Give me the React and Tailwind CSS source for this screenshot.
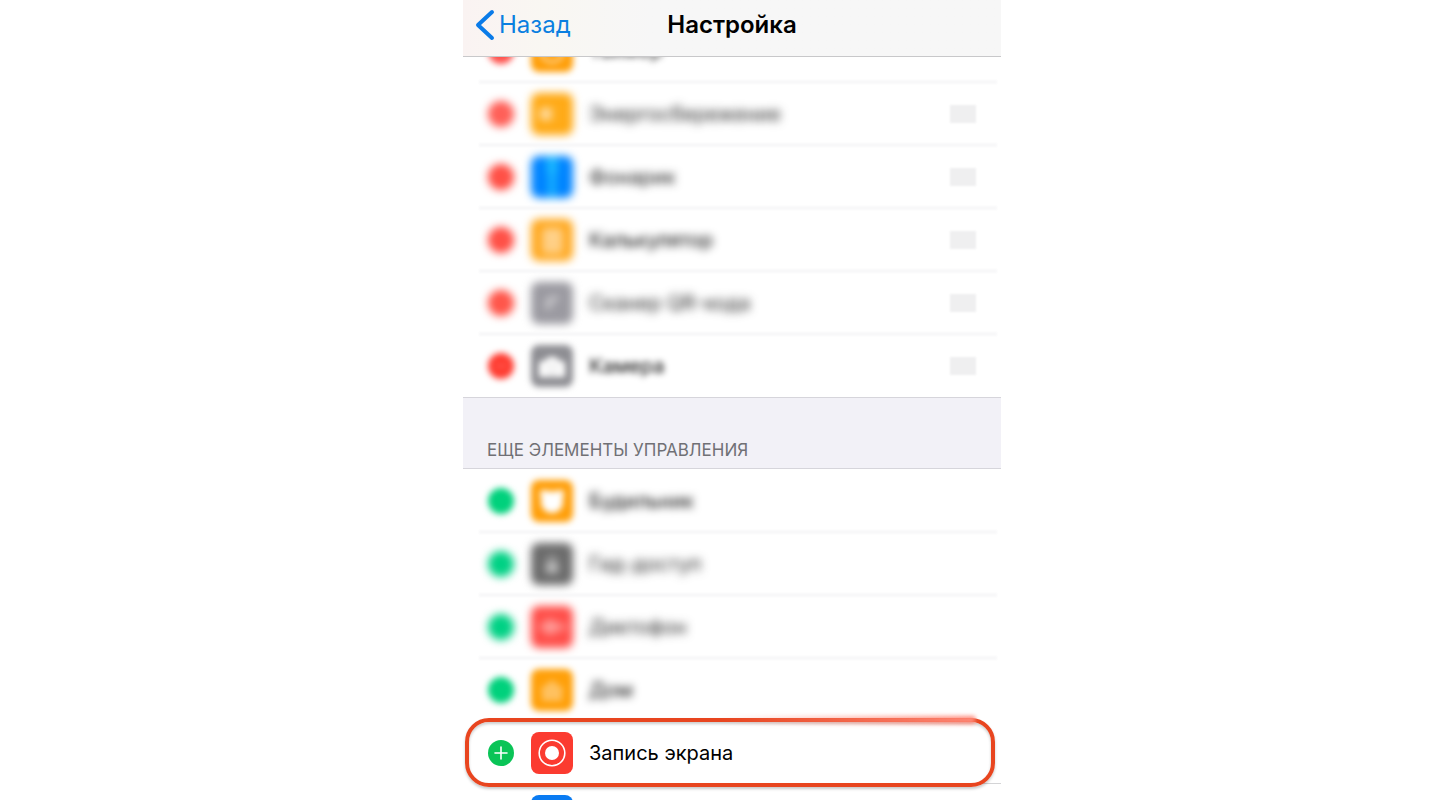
import clsx from 'clsx'

// ---------------------------------------------------------------------------
// Data
// ---------------------------------------------------------------------------
const INCLUDED = [
  { id: 'timer', label: 'Таймер', tile: 'bg-[#ff9f0a]', badge: 'bg-[#ff4f4a]', blur: 'blur-[3px]', textBlur: 'blur-[3px]', ink: 'text-neutral-800' },
  { id: 'battery', label: 'Энергосбережение', tile: 'bg-[#ffa914]', badge: 'bg-[#ff5a52]', blur: 'blur-[4px]', textBlur: 'blur-[5px]', ink: 'text-neutral-800', handle: true },
  { id: 'torch', label: 'Фонарик', tile: 'bg-[#0084ff]', badge: 'bg-[#ff4a40]', blur: 'blur-[4px]', textBlur: 'blur-[4px]', ink: 'text-neutral-900', handle: true },
  { id: 'calculator', label: 'Калькулятор', tile: 'bg-[#ffa71c]', badge: 'bg-[#ff4a40]', blur: 'blur-[4px]', textBlur: 'blur-[4px]', ink: 'text-black', handle: true },
  { id: 'qr', label: 'Сканер QR-кода', tile: 'bg-[#9b9aa1]', badge: 'bg-[#ff5044]', blur: 'blur-[4px]', textBlur: 'blur-[5px]', ink: 'text-neutral-800', handle: true },
  { id: 'camera', label: 'Камера', tile: 'bg-[#8e8e93]', badge: 'bg-[#ff3b30]', blur: 'blur-[3px]', textBlur: 'blur-[3px]', ink: 'text-black', handle: true },
]

const MORE = [
  { id: 'alarm', label: 'Будильник', tile: 'bg-[#ff9f0a]', badge: 'bg-[#00d17c]', blur: 'blur-[3px]', textBlur: 'blur-[4px]', ink: 'text-black' },
  { id: 'lock', label: 'Гид-доступ', tile: 'bg-[#6c6c6c]', badge: 'bg-[#00d184]', blur: 'blur-[4px]', textBlur: 'blur-[5px]', ink: 'text-neutral-800' },
  { id: 'voice', label: 'Диктофон', tile: 'bg-[#ff4f4a]', badge: 'bg-[#00d184]', blur: 'blur-[4px]', textBlur: 'blur-[5px]', ink: 'text-neutral-800' },
  { id: 'home', label: 'Дом', tile: 'bg-[#ffa00a]', badge: 'bg-[#00d17c]', blur: 'blur-[3px]', textBlur: 'blur-[4px]', ink: 'text-black' },
  { id: 'record', label: 'Запись экрана', tile: 'bg-[#fb3b30]', badge: 'bg-[#0ac457]', ink: 'text-black', highlighted: true },
  { id: 'hearing', tile: 'bg-[#0a7bf2]', badge: 'bg-[#0ac457]', ink: 'text-black' },
]

// ---------------------------------------------------------------------------
// Glyphs, all on a 42px tile
// ---------------------------------------------------------------------------
const GLYPHS = {
  timer: (
    <g fill="none" stroke="#fff" strokeWidth="3" opacity="0.6">
      <circle cx="21" cy="21" r="11" />
      <path d="M21 21l-5-6" />
    </g>
  ),
  battery: (
    <g opacity="0.6">
      <rect x="9" y="15" width="12" height="12" rx="2" fill="#fff" />
      <rect x="8" y="13" width="24" height="16" rx="3" fill="none" stroke="#fff" opacity="0.3" />
    </g>
  ),
  torch: <path d="M16 1h10v14l-2 4v22h-6V19l-2-4z" fill="#1cbcff" />,
  calculator: (
    <g fill="#fff">
      <rect x="11" y="9" width="21" height="26" rx="3" opacity="0.45" />
      <path d="M14 11h15v5H14zM14 20h3v3h-3zM20 20h3v3h-3zM26 20h3v3h-3zM14 27h3v3h-3zM20 27h3v3h-3zM26 27h3v3h-3z" opacity="0.15" />
    </g>
  ),
  qr: <path d="M15 27v-7q1-5 10-6l3 1-3 4h-4l-2 8z" fill="#fff" opacity="0.55" />,
  camera: (
    <g>
      <path d="M8 19q0-3 3-3h3l3-4h8l3 4h3q3 0 3 3v13H8z" fill="#fff" />
      <circle cx="21" cy="24" r="5" fill="none" stroke="#b5b5b8" strokeWidth="1" />
    </g>
  ),
  alarm: (
    <g fill="#fff">
      <circle cx="21" cy="22" r="11" />
      <circle cx="13" cy="14" r="4" />
      <circle cx="29" cy="14" r="4" />
    </g>
  ),
  lock: (
    <g opacity="0.6">
      <rect x="15" y="20" width="12" height="10" rx="2" fill="#fff" />
      <path d="M18 20v-3a3 3 0 0 1 6 0v3" fill="none" stroke="#fff" strokeWidth="2" />
    </g>
  ),
  voice: (
    <path d="M8 21h4M14 17v8M18 13v16M22 15v12M26 17v8M30 19v4M32 21h4" stroke="#fff" strokeWidth="3" opacity="0.6" />
  ),
  home: <path d="M21 11L8 21h3v11h20V21h3z" fill="#fff" opacity="0.35" />,
  record: (
    <g>
      <circle cx="21" cy="21" r="12.8" fill="none" stroke="#fff" strokeWidth="1.6" />
      <circle cx="21" cy="21" r="7" fill="#fff" />
    </g>
  ),
  hearing: <circle cx="21" cy="18" r="12" fill="none" stroke="#fff" strokeWidth="2" />,
}

function Tile({ item }) {
  return (
    <svg
      viewBox="0 0 42 42"
      className={clsx('size-[42px] shrink-0 rounded-lg', item.tile, item.blur)}
      aria-hidden="true"
    >
      {GLYPHS[item.id]}
    </svg>
  )
}

function BadgeButton({ item, removable }) {
  return (
    <button
      type="button"
      className={clsx('size-[26px] shrink-0 rounded-full', item.badge, item.blur)}
      aria-label={removable ? 'Удалить' : 'Добавить'}
    >
      <svg viewBox="0 0 26 26" className="size-full" fill="none" stroke="#fff" strokeWidth="1.6">
        {removable && <path d="M7 13h12" opacity="0.3" />}
        {item.highlighted && <path d="M7 13h12M13 7v12" strokeLinecap="round" />}
      </svg>
    </button>
  )
}

// Orange outline round a row; its top edge fades out towards the right
function Highlight() {
  return (
    <div className="pointer-events-none absolute -inset-y-[3px] left-0.5 right-1.5 z-10" aria-hidden="true">
      <div className="size-full rounded-3xl border-4 border-[#e8451f] shadow-[0_2px_3px_rgba(0,0,0,0.22),inset_0_2px_3px_rgba(0,0,0,0.2)]" />
      <div className="absolute -top-0.5 right-5 h-2 w-64 bg-linear-to-r from-transparent to-[#ff8a7a] blur-[2px]" />
    </div>
  )
}

function Row({ item, removable, last }) {
  return (
    <li className="relative flex h-[63px] items-center px-[25px]">
      <BadgeButton item={item} removable={removable} />
      <div className="ml-[17px] flex grow items-center gap-4">
        <Tile item={item} />
        {item.label && <span className={clsx('text-xl', item.ink, item.textBlur)}>{item.label}</span>}
      </div>
      {item.handle && <span className="h-[18px] w-[26px] bg-[#efeff0] blur-[1px]" />}
      {!last && !item.highlighted && (
        <span className="absolute -bottom-0.5 left-4 right-1 h-1 bg-[#f8f8f9] blur-[1px]" />
      )}
      {item.highlighted && <span className="absolute bottom-0 left-4 right-0 h-px bg-[#d4d4d6]" />}
      {item.highlighted && <Highlight />}
    </li>
  )
}

// ---------------------------------------------------------------------------
// Main
// ---------------------------------------------------------------------------
export default function App() {
  return (
    <div className="flex h-screen justify-center overflow-hidden bg-white pl-6 font-['Inter','Liberation_Sans',sans-serif]">
      <main className="w-full max-w-[538px]">
        <header className="relative z-20 grid h-[57px] grid-cols-[1fr_auto_1fr] items-center border-b border-[#c8c8ca] bg-[#f7f7f7] bg-linear-to-r from-[#faf3f2] via-[#f9f7f2] via-15% to-[#f7f7f7] to-35% px-3 pb-1.5">
          <a href="#back" className="flex items-center gap-1 text-2xl text-[#0a7fe0]">
            <svg viewBox="0 0 20 32" className="h-8 w-5" fill="none" stroke="#0a7be8" strokeWidth="4" strokeLinecap="round" strokeLinejoin="round" aria-hidden="true">
              <path d="M17 3L3 16l14 13" />
            </svg>
            Назад
          </a>
          <h1 className="text-2xl font-semibold text-black">Настройка</h1>
        </header>

        <ul className="-mt-[38px]">
          {INCLUDED.map((item, i) => (
            <Row key={item.id} item={item} removable last={i === INCLUDED.length - 1} />
          ))}
        </ul>

        <section>
          <h2 className="relative flex h-[72px] items-end border-y border-[#d6d5db] bg-[#f2f1f7] pb-[5px] pl-6 text-[17px] text-[#707075]">
            ЕЩЕ ЭЛЕМЕНТЫ УПРАВЛЕНИЯ
          </h2>
          <ul>
            {MORE.map((item) => (
              <Row key={item.id} item={item} last={item.id === 'home' || item.id === 'hearing'} />
            ))}
          </ul>
        </section>
      </main>
    </div>
  )
}
